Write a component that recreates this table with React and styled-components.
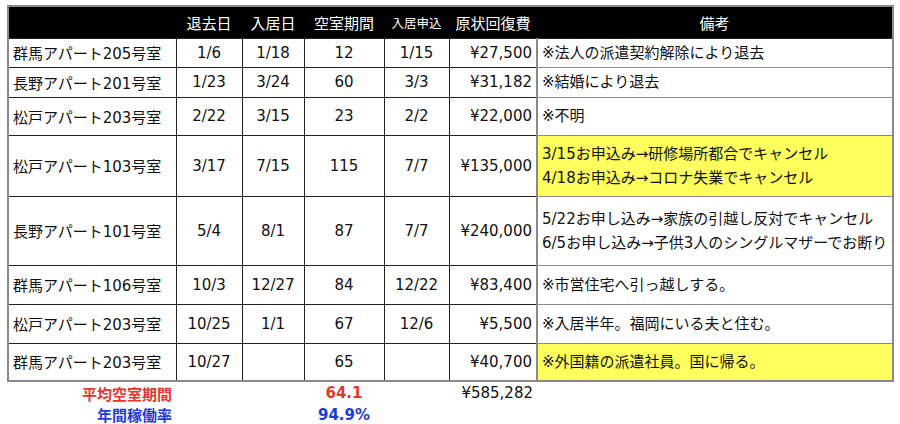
import React from 'react'
import styled, { createGlobalStyle } from 'styled-components'

const GlobalStyle = createGlobalStyle`
body {
  margin: 0;
  background: #fff;
  font-family: "DejaVu Sans", "Noto Sans CJK JP", sans-serif;
}
`;

const columns = [168, 66, 62, 80, 65, 88, 356];

const rows = [
    { name: '群馬アパート205号室', out: '1/6', in: '1/18', days: '12', apply: '1/15', cost: '¥27,500', note: ['※法人の派遣契約解除により退去'], h: 29 },
    { name: '長野アパート201号室', out: '1/23', in: '3/24', days: '60', apply: '3/3', cost: '¥31,182', note: ['※結婚により退去'], h: 30 },
    { name: '松戸アパート203号室', out: '2/22', in: '3/15', days: '23', apply: '2/2', cost: '¥22,000', note: ['※不明'], h: 38 },
    { name: '松戸アパート103号室', out: '3/17', in: '7/15', days: '115', apply: '7/7', cost: '¥135,000', note: ['3/15お申込み→研修場所都合でキャンセル', '4/18お申込み→コロナ失業でキャンセル'], h: 61, mark: true },
    { name: '長野アパート101号室', out: '5/4', in: '8/1', days: '87', apply: '7/7', cost: '¥240,000', note: ['5/22お申し込み→家族の引越し反対でキャンセル', '6/5お申し込み→子供3人のシングルマザーでお断り'], h: 69 },
    { name: '群馬アパート106号室', out: '10/3', in: '12/27', days: '84', apply: '12/22', cost: '¥83,400', note: ['※市営住宅へ引っ越しする。'], h: 39 },
    { name: '松戸アパート203号室', out: '10/25', in: '1/1', days: '67', apply: '12/6', cost: '¥5,500', note: ['※入居半年。福岡にいる夫と住む。'], h: 39 },
    { name: '群馬アパート203号室', out: '10/27', in: '', days: '65', apply: '', cost: '¥40,700', note: ['※外国籍の派遣社員。国に帰る。'], h: 38, mark: true },
];

const VacancyTable = () => {
    return (
        <Page>
            <Sheet>
                <colgroup>
                    {columns.map((w, i) => <col key={i} width={w} />)}
                </colgroup>
                <thead>
                    <HeadRow>
                        <HeadCell $first></HeadCell>
                        <HeadCell>退去日</HeadCell>
                        <HeadCell>入居日</HeadCell>
                        <HeadCell>空室期間</HeadCell>
                        <HeadCell $small>入居申込</HeadCell>
                        <HeadCell>原状回復費</HeadCell>
                        <HeadCell $last>備考</HeadCell>
                    </HeadRow>
                </thead>
                <tbody>
                    {rows.map((r, i) => (
                        <BodyRow key={i} $h={r.h}>
                            <NameCell $bottom={i === rows.length - 1}>{r.name}</NameCell>
                            <Cell $bottom={i === rows.length - 1}>{r.out}</Cell>
                            <Cell $bottom={i === rows.length - 1}>{r.in}</Cell>
                            <Cell $bottom={i === rows.length - 1}>{r.days}</Cell>
                            <Cell $bottom={i === rows.length - 1}>{r.apply}</Cell>
                            <CostCell $bottom={i === rows.length - 1}>{r.cost}</CostCell>
                            <NoteCell $mark={r.mark} $bottom={i === rows.length - 1}>
                                {r.note.map((line, j) => <NoteLine key={j}>{line}</NoteLine>)}
                            </NoteCell>
                        </BodyRow>
                    ))}
                </tbody>
                <tfoot>
                    <SumRow $h={23}>
                        <SumLabel $color="#e2372c">平均空室期間</SumLabel>
                        <SumCell />
                        <SumCell />
                        <SumValue $color="#e2372c">64.1</SumValue>
                        <SumCell />
                        <SumTotal>¥585,282</SumTotal>
                        <SumCell />
                    </SumRow>
                    <SumRow $h={17}>
                        <SumLabel $color="#1f3ad8">年間稼働率</SumLabel>
                        <SumCell />
                        <SumCell />
                        <SumValue $color="#1f3ad8">94.9%</SumValue>
                        <SumCell />
                        <SumCell />
                        <SumCell />
                    </SumRow>
                </tfoot>
            </Sheet>
        </Page>
    )
}

const Page = styled.div`
padding: 5px 0 0 7px;
`;

const Sheet = styled.table`
width: 885px;
table-layout: fixed;
border-collapse: collapse;
font-size: 15px;
color: #111;
`;

const HeadRow = styled.tr`
height: 32px;
background: #000;
`;

const HeadCell = styled.th`
color: #fff;
font-weight: normal;
font-size: ${p => p.$small ? '12.5px' : '15px'};
text-align: center;
padding: 0;
border-top: 2px solid #8a8a8a;
border-left: ${p => p.$first ? '2px solid #8a8a8a' : 'none'};
border-right: ${p => p.$last ? '2px solid #8a8a8a' : 'none'};
border-bottom: 1px solid #222;
`;

const BodyRow = styled.tr`
height: ${p => p.$h}px;
`;

const Cell = styled.td`
text-align: center;
padding: 0 4px;
border: 1px solid #222;
border-bottom: ${p => p.$bottom ? '2px solid #8a8a8a' : '1px solid #222'};
white-space: nowrap;
`;

const NameCell = styled(Cell)`
text-align: left;
border-left: 2px solid #8a8a8a;
`;

const CostCell = styled(Cell)`
text-align: right;
`;

const NoteCell = styled(Cell)`
text-align: left;
background: ${p => p.$mark ? '#ffff5e' : '#fff'};
border: 1px solid #8a8a8a;
border-left: 2px solid #8a8a8a;
border-right: 2px solid #8a8a8a;
border-bottom: ${p => p.$bottom ? '2px solid #8a8a8a' : '1px solid #8a8a8a'};
`;

const NoteLine = styled.div`
line-height: 24px;
`;

const SumRow = styled.tr`
height: ${p => p.$h}px;
`;

const SumCell = styled.td`
padding: 0 4px;
border: none;
`;

const SumLabel = styled(SumCell)`
text-align: right;
font-weight: bold;
color: ${p => p.$color};
`;

const SumValue = styled(SumCell)`
text-align: center;
font-weight: bold;
color: ${p => p.$color};
`;

const SumTotal = styled(SumCell)`
text-align: right;
`;

const App = () => (
    <>
        <GlobalStyle />
        <VacancyTable />
    </>
)

export default App;
